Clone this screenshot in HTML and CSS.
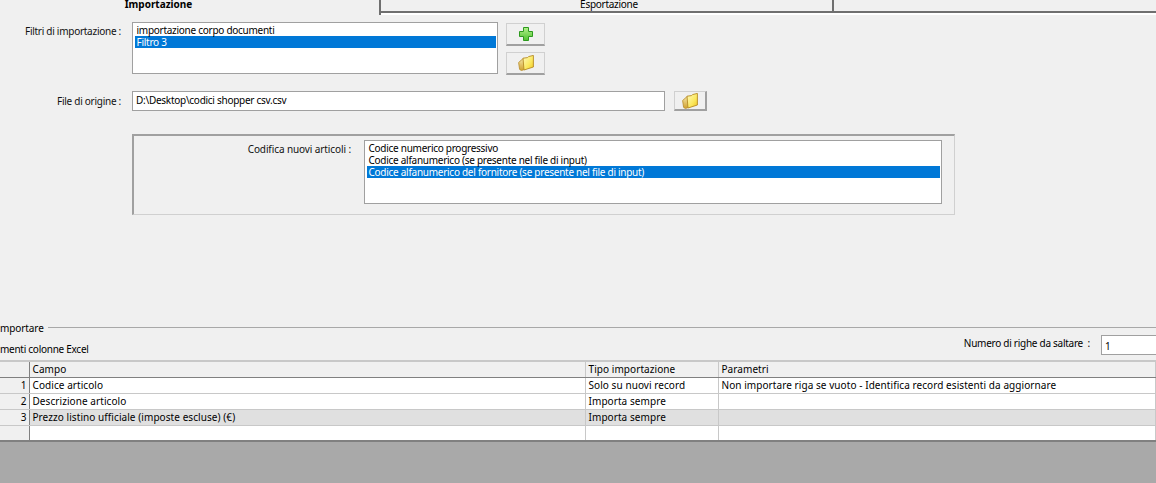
FILE: index.html
```html
<!DOCTYPE html>
<html lang="it">
<head>
<meta charset="utf-8">
<title>Importazione</title>
<link rel="stylesheet" href="styles.css">
</head>
<body>
<svg class="defs" width="0" height="0" aria-hidden="true">
  <defs>
    <linearGradient id="fy" x1="0" y1="0" x2="1" y2="1"><stop offset="0" stop-color="#fffbc0"/><stop offset=".6" stop-color="#fbe85e"/><stop offset="1" stop-color="#efc61f"/></linearGradient>
    <linearGradient id="fb" x1="0" y1="0" x2="0" y2="1"><stop offset="0" stop-color="#f6e6a4"/><stop offset="1" stop-color="#cf9f2e"/></linearGradient>
    <linearGradient id="gp" x1="0" y1="0" x2="0" y2="1"><stop offset="0" stop-color="#b4f28c"/><stop offset="1" stop-color="#4ec02e"/></linearGradient>
    <symbol id="folder" viewBox="0 0 16 16">
      <path d="M.6 7.5 5 3.6 7.5 5 7.5 14 3.5 15.6 1.6 14.4Z" fill="url(#fb)" stroke="#b98d2c" stroke-width=".8"/>
      <path d="M5 3.2 9.5 2.6 10.5 1.6 15.4.4 15.4 12 6 15Z" fill="url(#fy)" stroke="#b58a24" stroke-width=".9"/>
    </symbol>
  </defs>
</svg>
<nav class="tabs">
  <div class="tab tab-active">Importazione</div>
  <div class="tab tab-second">Esportazione</div>
  <div class="tab"></div>
</nav>
<main class="form">
  <section class="row row-filters">
    <label class="label">Filtri di importazione :</label>
    <ul class="list list-filters">
      <li>importazione corpo documenti</li>
      <li class="sel">Filtro 3</li>
    </ul>
    <div class="btn-col">
      <button class="btn btn-wide" type="button">
        <svg class="ico" viewBox="0 0 16 16"><path d="M5.5 1.5h5v4h4v5h-4v4h-5v-4h-4v-5h4Z" fill="url(#gp)" stroke="#2d9a1e"/></svg>
      </button>
      <button class="btn btn-wide" type="button"><svg class="ico"><use href="#folder"/></svg></button>
    </div>
  </section>
  <section class="row row-file">
    <label class="label">File di origine :</label>
    <div class="input input-file">D:\Desktop\codici shopper csv.csv</div>
    <button class="btn btn-small" type="button"><svg class="ico"><use href="#folder"/></svg></button>
  </section>
  <section class="panel">
    <label class="label panel-label">Codifica nuovi articoli :</label>
    <ul class="list list-code">
      <li>Codice numerico progressivo</li>
      <li>Codice alfanumerico (se presente nel file di input)</li>
      <li class="sel">Codice alfanumerico del fornitore (se presente nel file di input)</li>
    </ul>
  </section>
</main>
<section class="columns">
  <div class="legend"><span class="legend-text">mportare</span><span class="rule"></span></div>
  <div class="subbar">
    <span class="excel">menti colonne Excel</span>
    <label class="skip">Numero di righe da saltare&nbsp; :</label>
    <div class="input input-skip">1</div>
  </div>
  <table class="grid">
    <colgroup><col class="c0"><col class="c1"><col class="c2"><col></colgroup>
    <thead>
      <tr><th></th><th>Campo</th><th>Tipo importazione</th><th>Parametri</th></tr>
    </thead>
    <tbody>
      <tr><th>1</th><td>Codice articolo</td><td>Solo su nuovi record</td><td>Non importare riga se vuoto - Identifica record esistenti da aggiornare</td></tr>
      <tr><th>2</th><td>Descrizione articolo</td><td>Importa sempre</td><td></td></tr>
      <tr class="alt"><th>3</th><td>Prezzo listino ufficiale (imposte escluse) (€)</td><td>Importa sempre</td><td></td></tr>
      <tr><th></th><td></td><td></td><td></td></tr>
    </tbody>
  </table>
</section>
<div class="footer"></div>
</body>
</html>
```
FILE: styles.css
```css
* { box-sizing: border-box; }
html, body { margin: 0; height: 100%; }
body {
  width: 1156px; height: 483px; overflow: hidden;
  display: flex; flex-direction: column;
  background: #f0f0f0; color: #000;
  font: 10px/12px "Noto Sans", sans-serif;
  letter-spacing: -.27px;
}
.defs { position: absolute; }
.tabs {
  display: grid; grid-template-columns: 381px 453px 1fr;
  height: 15px; flex: none;
}
.tab {
  height: 13px; line-height: 9px; text-align: center;
  border-bottom: 2px solid #6f6f6f; border-right: 2px solid #6f6f6f;
  box-shadow: 0 2px 0 #fff; background: #f0f0f0;
}
.tab:last-child { border-right: 0; }
.tab-second { padding-left: 5px; }
.tab-active {
  font-weight: 700; border-bottom: 0; height: 15px; padding-right: 62px;
  box-shadow: 2px 0 0 #fff; border-right: 2px solid #6f6f6f; line-height: 9px;
  letter-spacing: 0;
}
.form { flex: none; height: 312px; padding-top: 7px; }
.row { display: flex; align-items: flex-start; }
.label { width: 121px; flex: none; text-align: right; padding-top: 3px; color: #111; }
.list {
  list-style: none; margin: 0; background: #fff; flex: none;
  border: 1px solid #a0a0a0; padding: 1px 1px 0 2px;
}
.list li { height: 12px; line-height: 12px; padding-left: 1.5px; white-space: nowrap; }
.list .sel { background: #0078d7; color: #fff; }
.row-filters .list { margin-left: 11px; }
.list-filters { width: 366px; height: 52px; }
.btn-col { display: flex; flex-direction: column; gap: 6px; margin: 1px 0 0 8px; }
.btn {
  display: flex; align-items: center; justify-content: center; padding: 0;
  background: #f0f0f0;
  border: 1px solid #d0d0d0; border-bottom: 2px solid #a0a0a0;
}
.btn-wide { width: 39px; height: 23px; }
.btn-small { width: 33px; height: 20px; margin-left: 9px; border-right: 2px solid #a0a0a0; }
.ico { width: 16px; height: 16px; display: block; }
.input {
  background: #fff; border: 1px solid #a0a0a0; padding: 2px 2px 3px 3px;
  height: 20px; white-space: nowrap;
}
.row-file { margin-top: 16px; }
.row-file .label { padding-top: 4px; }
.input-file { width: 533px; margin-left: 11px; }
.panel {
  display: flex; align-items: flex-start;
  width: 823px; height: 81px; margin: 23px 0 0 132px;
  padding: 4px 12px 0 0;
  border: 1px solid #d0d0d0; border-top: 2px solid #a0a0a0; border-left: 2px solid #a0a0a0;
}
.panel-label { width: 217px; padding-top: 3px; margin-right: 13px; letter-spacing: -.1px; }
.list-code { width: 578px; height: 64px; }
.columns { flex: none; }
.legend { display: flex; align-items: center; gap: 4px; height: 12px; margin-top: -6px; }
.legend-text { padding-top: 2px; letter-spacing: -.1px; }
.rule { flex: 1; height: 1px; background: #a8a8a8; }
.subbar { display: flex; align-items: flex-start; height: 20px; margin-top: 2px; }
.excel { margin-top: 8px; }
.skip { margin-left: auto; margin-right: 11px; margin-top: 2px; }
.input-skip { width: 60px; height: 20px; margin-right: -5px; flex: none; padding-top: 4px; }
.grid {
  width: 1156px; table-layout: fixed; border-collapse: collapse;
  margin-top: 5px; border-top: 2px solid #c8c8c8; border-bottom: 2px solid #808080;
  letter-spacing: .07px;
}
.c0 { width: 29px; }
.c1 { width: 556px; }
.c2 { width: 133px; }
.grid th, .grid td {
  height: 16px; padding: 0 2px 0 3px; font-weight: 400; text-align: left;
  border-bottom: 1px solid #c8c8c8; border-right: 1px solid #c8c8c8;
  background: #fff; white-space: nowrap; overflow: hidden;
}
.grid thead th { background: #f0f0f0; border-bottom: 1px solid #808080; }
.grid tbody th {
  background: #f0f0f0; text-align: right; border-right: 1px solid #808080;
}
.grid thead th:first-child { border-right: 1px solid #808080; }
.grid .alt td { background: #e0e0e0; }
.footer { flex: 1; background: #a9a9a9; }
```
